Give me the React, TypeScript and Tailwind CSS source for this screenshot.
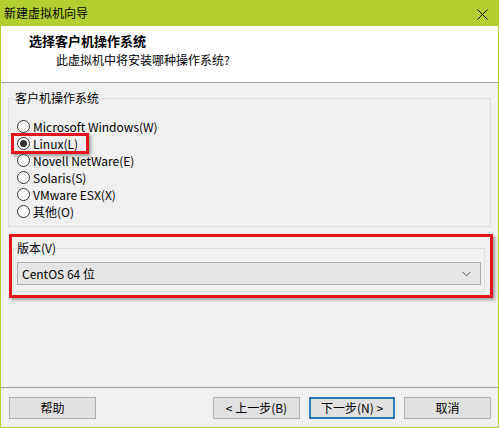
const options = [
  'Microsoft Windows(W)',
  'Linux(L)',
  'Novell NetWare(E)',
  'Solaris(S)',
  'VMware ESX(X)',
  '其他(O)',
]

function Radio({ checked }: { checked?: boolean }) {
  return (
    <span className="w-[13px] h-[13px] rounded-full border border-[#333] bg-white flex items-center justify-center shrink-0">
      {checked && <span className="w-[7px] h-[7px] rounded-full bg-[#333]" />}
    </span>
  )
}

function Button({ label, primary }: { label: string; primary?: boolean }) {
  return (
    <button
      className={
        primary
          ? 'w-[86px] h-[22px] bg-[#e1e1e1] border-2 border-[#2a7ac4] text-[12px] leading-none'
          : 'w-[87px] h-[22px] bg-[#e1e1e1] border border-[#adadad] text-[12px] leading-none'
      }
    >
      {label}
    </button>
  )
}

export default function App() {
  return (
    <div className="w-[499px] h-[428px] flex flex-col bg-[#b2cf2f] px-px pb-px text-[12px] leading-[16px] text-black font-['Microsoft_YaHei','Noto_Sans_CJK_SC',sans-serif]">
      {/* title bar */}
      <div className="h-[26px] flex items-center justify-between pl-[3px] pr-[10px]">
        <span className="text-[12px]">新建虚拟机向导</span>
        <svg width="11" height="11" viewBox="0 0 11 11" className="mt-[2px]">
          <path d="M0.5 0.5L10.5 10.5M10.5 0.5L0.5 10.5" stroke="#111" strokeWidth="1" />
        </svg>
      </div>

      <div className="flex-1 flex flex-col bg-[#f0f0f0]">
        {/* header */}
        <div className="h-[57px] bg-white border-b border-[#a0a0a0] pl-[28px] pt-[7px]">
          <div className="text-[13px] font-bold">选择客户机操作系统</div>
          <div className="mt-[3px] pl-[27px]">此虚拟机中将安装哪种操作系统?</div>
        </div>

        {/* guest os group */}
        <fieldset className="mx-[7px] mt-[7px] border border-[#dcdcdc] px-[6px] pb-[6px]">
          <legend className="px-0">客户机操作系统</legend>
          <div className="mt-[12px] flex flex-col">
            {options.map((o, i) => (
              <div key={o} className="relative h-[17px] flex items-center gap-[3px] pl-[2px]">
                <Radio checked={i === 1} />
                <span>{o}</span>
                {i === 1 && (
                  <span className="absolute -left-[4px] -top-[2px] w-[78px] h-[21px] border-[3px] border-[#e3141b] shadow-[2px_2px_3px_rgba(0,0,0,0.35)]" />
                )}
              </div>
            ))}
          </div>
        </fieldset>

        {/* version group, highlighted */}
        <div className="ml-[8px] mt-[7px] w-[484px] border-[3px] border-[#e3141b] shadow-[2px_2px_3px_rgba(0,0,0,0.35)] pb-[3px]">
          <fieldset className="ml-[1px] mr-[5px] mt-[3px] border border-[#dcdcdc] px-[3px] pb-[6px]">
            <legend className="px-0">版本(V)</legend>
            <div className="mt-[6px] h-[23px] w-[464px] bg-[#e5e5e5] border border-[#adadad] flex items-center justify-between pl-[4px] pr-[9px]">
              <span>CentOS 64 位</span>
              <svg width="9" height="6" viewBox="0 0 9 6">
                <path d="M0.5 0.8L4.5 4.8L8.5 0.8" stroke="#555" strokeWidth="1" fill="none" />
              </svg>
            </div>
          </fieldset>
        </div>

        <div className="flex-1" />

        {/* footer */}
        <div className="h-[40px] border-t border-[#a0a0a0] flex items-start pt-[9px] pl-[8px] pr-[7px]">
          <Button label="帮助" />
          <div className="flex-1" />
          <div className="flex gap-[9px]">
            <Button label="< 上一步(B)" />
            <Button label="下一步(N) >" primary />
            <Button label="取消" />
          </div>
        </div>
      </div>
    </div>
  )
}
